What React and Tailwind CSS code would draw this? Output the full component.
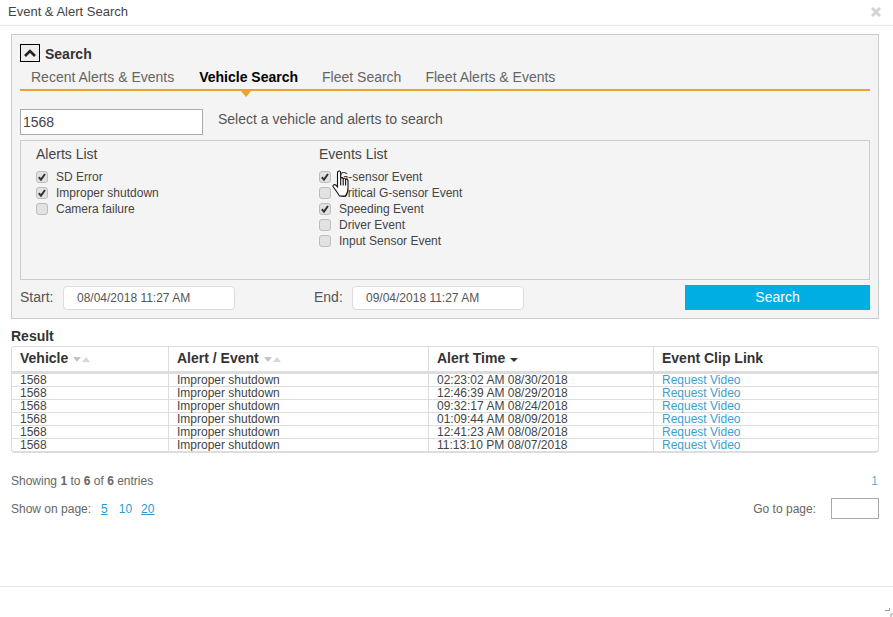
import React from 'react';

const rows = [
  '02:23:02 AM 08/30/2018',
  '12:46:39 AM 08/29/2018',
  '09:32:17 AM 08/24/2018',
  '01:09:44 AM 08/09/2018',
  '12:41:23 AM 08/08/2018',
  '11:13:10 PM 08/07/2018',
];

const alerts = [
  { label: 'SD Error', on: true },
  { label: 'Improper shutdown', on: true },
  { label: 'Camera failure', on: false },
];

const events = [
  { label: 'G-sensor Event', on: true },
  { label: 'Critical G-sensor Event', on: false },
  { label: 'Speeding Event', on: true },
  { label: 'Driver Event', on: false },
  { label: 'Input Sensor Event', on: false },
];

const Check = ({ label, on }) => (
  <div className="flex h-4 items-center">
    <span className="flex h-3 w-3 items-center justify-center rounded-[3px] border border-[#bdbdbd] bg-[#e2e2e2]">
      {on && (
        <svg width="10" height="10" viewBox="0 0 10 10">
          <path d="M1.8 5.2 L4 7.6 L8 2" fill="none" stroke="#333" strokeWidth="2" />
        </svg>
      )}
    </span>
    <span className="ml-2 text-[12px] text-[#444]">{label}</span>
  </div>
);

const CheckList = ({ title, items, className }) => (
  <div className={className}>
    <div className="h-[25px] text-[14px] leading-[20px] text-[#444]">{title}</div>
    {items.map((item) => (
      <Check key={item.label} {...item} />
    ))}
  </div>
);

const SortArrows = () => (
  <svg width="17" height="5" viewBox="0 0 17 5" className="ml-[5px] mt-[2px]">
    <path d="M0 0 H8 L4 5 Z" fill="#c4c4c4" />
    <path d="M9 5 H17 L13 0 Z" fill="#d8d8d8" />
  </svg>
);

const HeadCell = ({ className, children }) => (
  <div className={`flex h-[24px] items-center border-r border-[#ddd] pb-[1px] pl-2 text-[14px] font-bold text-[#333] ${className}`}>
    {children}
  </div>
);

const DateField = ({ value, className }) => (
  <div className={`flex h-6 w-[172px] items-center rounded-[4px] border border-[#ddd] bg-white pl-[13px] text-[12px] text-[#555] ${className}`}>
    {value}
  </div>
);

export default function App() {
  return (
    <div
      className="relative flex h-[617px] w-[893px] flex-col overflow-hidden bg-white text-[#444]"
      style={{ fontFamily: '"Liberation Sans", Arial, sans-serif' }}
    >
      {/* Title bar */}
      <div className="flex h-[26px] shrink-0 items-center justify-between border-b border-[#e5e5e5] pb-[2px] pl-2 pr-3">
        <span className="text-[13px] text-[#444]">Event &amp; Alert Search</span>
        <svg width="10" height="10" viewBox="0 0 10 10">
          <path d="M1 1 L9 9 M9 1 L1 9" stroke="#d4d4d4" strokeWidth="3" />
        </svg>
      </div>

      <div className="flex-1 pl-[11px] pr-[14px] pt-2">
        {/* Search panel */}
        <div className="h-[285px] border border-[#ccc] bg-[#f4f4f4] px-2 pt-[9px]">
          <div className="flex h-[18px] items-center">
            <span className="flex h-[18px] w-5 items-center justify-center border border-black bg-[#eee]">
              <svg width="12" height="8" viewBox="0 0 12 8">
                <path d="M1 7 L6 2 L11 7" fill="none" stroke="#222" strokeWidth="2.6" />
              </svg>
            </span>
            <span className="ml-[5px] mt-[2px] text-[14px] font-bold text-[#333]">Search</span>
          </div>

          {/* Tabs */}
          <div className="relative mt-[3px] flex h-[26px] items-center gap-6 border-b-2 border-[#f0a030] pl-[11px] text-[14px] text-[#666]">
            <span className="mr-[1px]">Recent Alerts &amp; Events</span>
            <span className="font-bold text-black">Vehicle Search</span>
            <span>Fleet Search</span>
            <span>Fleet Alerts &amp; Events</span>
            <span className="absolute left-[221px] top-[26px] h-0 w-0 border-x-[5px] border-t-[6px] border-x-transparent border-t-[#f0a030]" />
          </div>

          <div className="mt-[18px] flex items-start">
            <div className="flex h-[26px] w-[183px] items-center border border-[#aaa] bg-white pl-[2px] text-[14px] text-[#444]">
              1568
            </div>
            <span className="ml-[15px] text-[14px] leading-[20px] text-[#555]">
              Select a vehicle and alerts to search
            </span>
          </div>

          {/* Lists */}
          <div className="mt-[5px] flex h-[140px] border border-[#ccc] pl-[15px] pt-[3px]">
            <CheckList title="Alerts List" items={alerts} className="w-[283px]" />
            <CheckList title="Events List" items={events} />
          </div>

          <div className="mt-[5px] flex h-[25px] items-center text-[14px] text-[#555]">
            <span className="w-[43px]">Start:</span>
            <DateField value="08/04/2018 11:27 AM" />
            <span className="ml-[79px] w-[38px]">End:</span>
            <DateField value="09/04/2018 11:27 AM" />
            <button className="ml-auto h-[25px] w-[185px] bg-[#00aee4] text-[14px] text-white">Search</button>
          </div>
        </div>

        {/* Result table */}
        <div className="mt-[9px] h-[18px] text-[14px] font-bold leading-[16px] text-[#333]">Result</div>
        <div className="overflow-hidden rounded-[4px] border border-b-2 border-[#ddd]">
          <div className="grid grid-cols-[157px_260px_225px_1fr] border-b-[3px] border-[#ddd]">
            <HeadCell>Vehicle<SortArrows /></HeadCell>
            <HeadCell>Alert / Event<SortArrows /></HeadCell>
            <HeadCell>
              Alert Time
              <span className="ml-[5px] mt-[2px] h-0 w-0 border-x-[4px] border-t-[4px] border-x-transparent border-t-[#333]" />
            </HeadCell>
            <HeadCell className="border-r-0">Event Clip Link</HeadCell>
          </div>
          {rows.map((time, i) => (
            <div
              key={time}
              className={`grid grid-cols-[157px_260px_225px_1fr] text-[12px] leading-[12px] text-[#444] ${i > 0 ? 'h-[13px] border-t border-[#ddd]' : 'h-[12px]'}`}
            >
              <div className="border-r border-[#ddd] pl-2">1568</div>
              <div className="border-r border-[#ddd] pl-2">Improper shutdown</div>
              <div className="border-r border-[#ddd] pl-2">{time}</div>
              <div className="pl-2 text-[#3b9fd0]">Request Video</div>
            </div>
          ))}
        </div>

        {/* Paging */}
        <div className="mt-[20px] flex h-4 items-center justify-between text-[12px] text-[#666]">
          <span>
            Showing <b>1</b> to <b>6</b> of <b>6</b> entries
          </span>
          <span className="pr-[1px] text-[#5cb3d8]">1</span>
        </div>
        <div className="mt-[9px] flex h-[21px] items-center text-[12px] text-[#666]">
          <span>Show on page:</span>
          <a className="ml-[10px] text-[#2a9bcf] underline">5</a>
          <a className="ml-[11px] text-[#2a9bcf]">10</a>
          <a className="ml-[9px] text-[#2a9bcf] underline">20</a>
          <span className="ml-auto">Go to page:</span>
          <div className="ml-[15px] h-[21px] w-[48px] border border-[#aaa] bg-white" />
        </div>
      </div>

      {/* Footer */}
      <div className="relative h-[31px] shrink-0 border-t border-[#e5e5e5]">
        <svg width="8" height="9" viewBox="0 0 8 9" className="absolute bottom-0 right-0">
          <path d="M0 2.5 H4.5 V0 M6 9 V6 H8" fill="none" stroke="#999" strokeWidth="1" />
        </svg>
      </div>

      {/* Mouse cursor over the G-sensor label */}
      <svg width="18" height="27" viewBox="0 0 18 27" className="absolute left-[332px] top-[170px]">
        <path
          d="M6 1.5 C7 0.6 8.5 1 8.7 2.5 V8 C9.6 7.3 10.7 7.5 11.2 8.5 C12.2 8 13.2 8.3 13.6 9.4 C14.8 9 16 9.7 16 11 V18 C16 21.5 14.8 24.5 13.4 26 H7.5 C6 23.5 3.5 20 1.2 16.8 C0.4 15 2.4 14 3.8 15 L5.5 16.8 V2.5 Z"
          fill="#fff"
          stroke="#111"
          strokeWidth="1.1"
        />
        <path d="M8.7 8 V15.5 M11.2 8.5 V15.5 M13.6 9.4 V15.5" fill="none" stroke="#111" strokeWidth="1.1" />
      </svg>
    </div>
  );
}
